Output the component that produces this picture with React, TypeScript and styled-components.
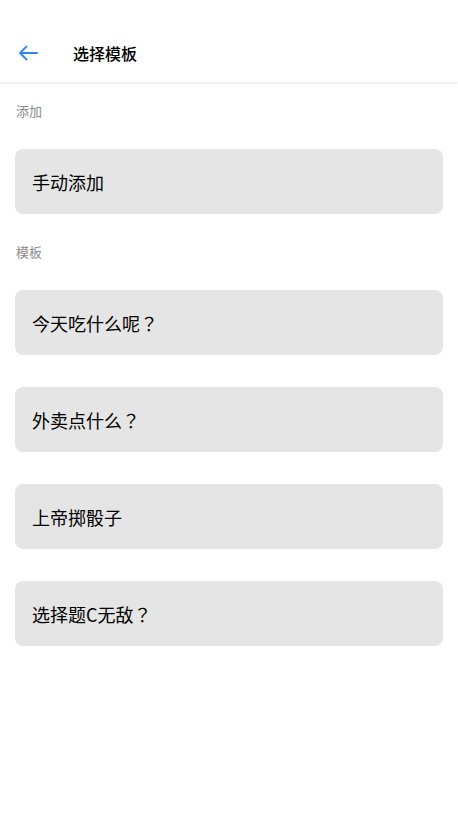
import React from "react";
import styled, { createGlobalStyle } from "styled-components";

const Global = createGlobalStyle`
  html, body { margin: 0; padding: 0; background: #fff; }
  body {
    font-family: "Noto Sans CJK SC", "Noto Sans", sans-serif;
  }
`;

const Page = styled.div`
  width: 458px;
  min-height: 815px;
  background: #fff;
`;

const Header = styled.header`
  height: 82px;
  display: flex;
  align-items: center;
  padding-top: 24px;
  box-sizing: border-box;
  box-shadow: 0 1px 3px rgba(0, 0, 0, 0.12);
  position: relative;
`;

const BackButton = styled.button`
  width: 20px;
  height: 20px;
  margin-left: 18px;
  padding: 0;
  border: none;
  background: none;
  display: flex;
  align-items: center;
  justify-content: center;
`;

const Title = styled.h1`
  margin: 0 0 0 35px;
  font-size: 16px;
  font-weight: 500;
  color: #000;
  line-height: 20px;
`;

const Content = styled.main`
  padding: 0 15px;
  display: flex;
  flex-direction: column;
`;

const SectionLabel = styled.div<{ $top: number }>`
  margin-top: ${(p) => p.$top}px;
  height: 20px;
  line-height: 20px;
  font-size: 13px;
  color: #8a8a8a;
  padding-left: 1px;
`;

const CardList = styled.div`
  margin-top: 28px;
  display: flex;
  flex-direction: column;
  gap: 32px;
`;

const Card = styled.div`
  height: 65px;
  border-radius: 8px;
  background: #e5e5e5;
  display: flex;
  align-items: center;
  padding-left: 17px;
  font-size: 18px;
  color: #000;
  white-space: pre;
`;

const Punct = styled.span`
  font-family: "Noto Sans CJK JP", "Noto Sans CJK SC", sans-serif;
  text-spacing-trim: space-all;
`;

const renderText = (t: string) =>
  t.split(/(？)/).map((part, i) =>
    part === "？" ? <Punct key={i}>{part}</Punct> : <React.Fragment key={i}>{part}</React.Fragment>
  );

const templates = ["今天吃什么呢？", "外卖点什么？", "上帝掷骰子", "选择题C无敌？"];

export default function App() {
  return (
    <Page>
      <Global />
      <Header>
        <BackButton aria-label="返回">
          <svg width="20" height="16" viewBox="0 0 20 16" fill="none">
            <path d="M19 8H2M8.5 1.5L2 8l6.5 6.5" stroke="#2e84f6" strokeWidth="1.8" strokeLinecap="round" strokeLinejoin="round" />
          </svg>
        </BackButton>
        <Title>选择模板</Title>
      </Header>
      <Content>
        <SectionLabel $top={19}>添加</SectionLabel>
        <CardList>
          <Card>手动添加</Card>
        </CardList>
        <SectionLabel $top={28}>模板</SectionLabel>
        <CardList>
          {templates.map((t) => (
            <Card key={t}>{renderText(t)}</Card>
          ))}
        </CardList>
      </Content>
    </Page>
  );
}
